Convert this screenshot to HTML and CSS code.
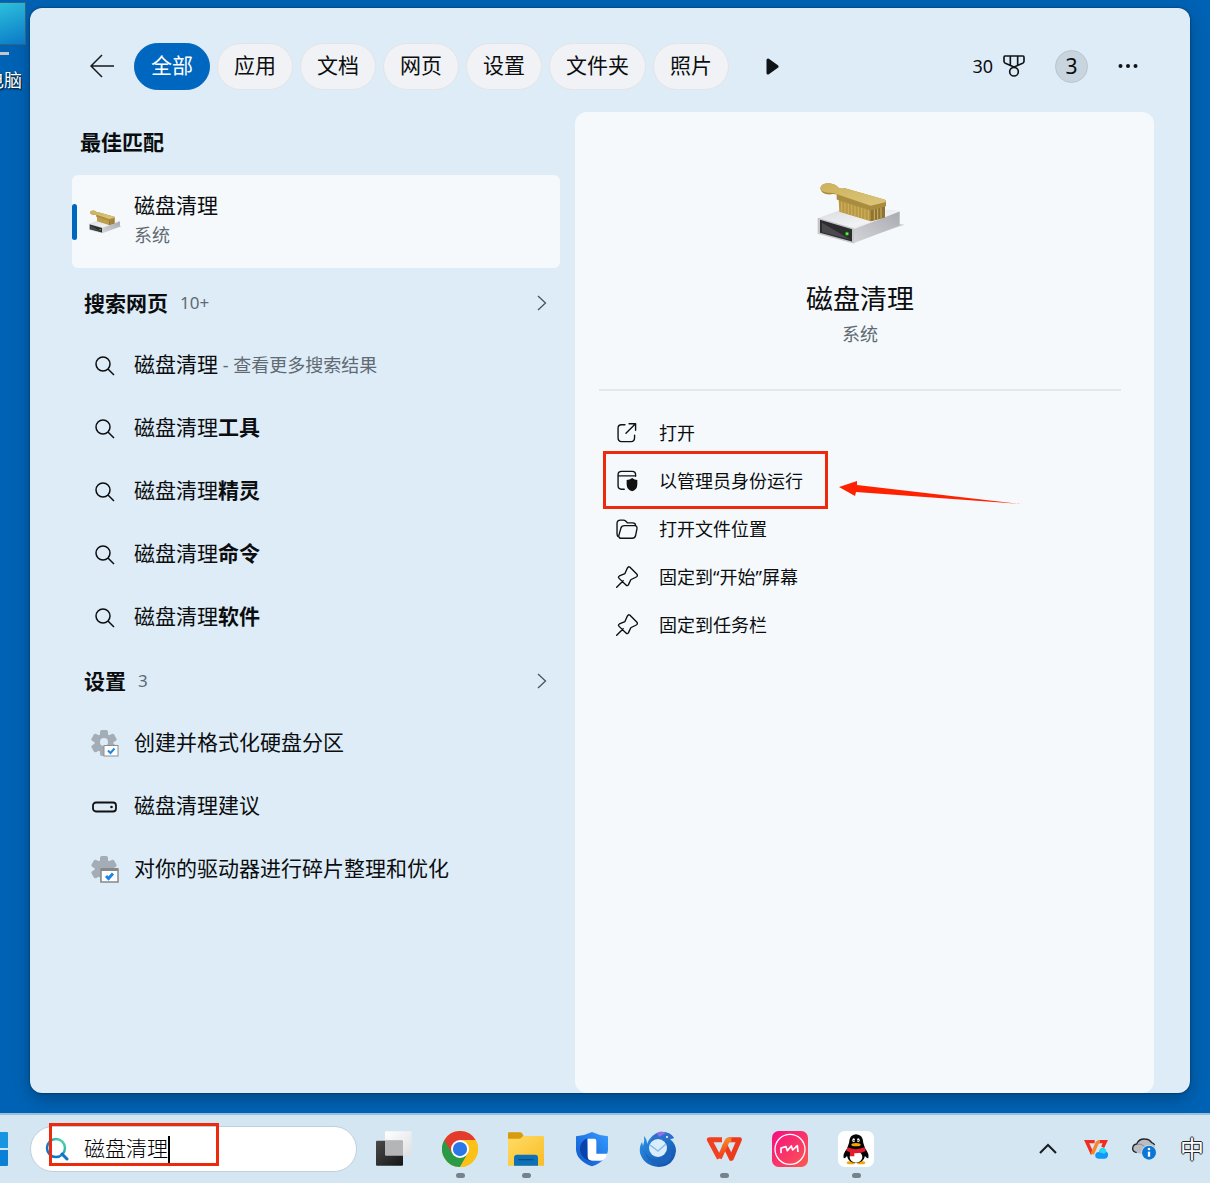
FILE: index.html
```html
<!DOCTYPE html>
<html lang="zh-CN">
  <head>
    <meta charset="UTF-8" />
    <meta name="viewport" content="width=device-width, initial-scale=1.0" />
    <title>搜索</title>
    <link rel="stylesheet" href="styles.css">
  </head>
  <body>
    <!-- Shared icons -->
    <svg class="sprite" aria-hidden="true">
      <defs>
        <linearGradient id="drive-top" x1="0" y1="0" x2="1" y2="1">
          <stop offset="0" stop-color="#d9dade" />
          <stop offset="0.6" stop-color="#f1f2f4" />
          <stop offset="1" stop-color="#c9cacf" />
        </linearGradient>
        <linearGradient id="drive-side" x1="0" y1="1" x2="1" y2="0">
          <stop offset="0" stop-color="#d4d5d9" />
          <stop offset="1" stop-color="#a9abb1" />
        </linearGradient>
        <linearGradient id="brush-wood" x1="0" y1="0" x2="1" y2="1">
          <stop offset="0" stop-color="#cdb25a" />
          <stop offset="1" stop-color="#dcc67c" />
        </linearGradient>
      </defs>
      <symbol id="disk-cleanup" viewBox="76 60 270 200">
        <path d="M190 246 L345 194 L325 190 Z" fill="#cfd3d8" />
        <path d="M84 174 L166 144 L325 150 Q331 151 330 158 L192 212 Z" fill="url(#drive-top)" />
        <path d="M190 208 L330 154 V196 L190 250 Z" fill="url(#drive-side)" />
        <path d="M84 173 L192 204 V250 L84 221 Z" fill="#c3c5c9" />
        <path d="M91 179 L187 207 V244 L91 218 Z" fill="#2c2c2e" />
        <path d="M97 188 L97 216 L183 239 Z" fill="#4a4a4c" />
        <circle cx="172" cy="221" r="6" fill="#17b317" />
        <circle cx="172" cy="221" r="3" fill="#7dff5c" />
        <path d="M147 118 L243 146 L286 136 V172 L243 183 L149 155 Z" fill="#b99843" />
        <path d="M243 144 L286 134 V172 L243 183 Z" fill="#8e7433" />
        <path d="M156 124 V156 M166 127 V159 M176 130 V162 M186 133 V165 M196 136 V168 M206 139 V171 M216 142 V174 M226 144 V177 M236 146 V180 M254 145 V179 M264 143 V177 M274 141 V174" stroke="#cfb263" stroke-width="3" />
        <path d="M92 84 Q94 69 118 69 Q136 70 146 82 Q150 87 166 84 L286 119 Q290 121 289 126 V138 L242 151 L141 118 V103 Q132 100 118 103 Q94 101 92 84 Z" fill="#a98c3d" />
        <path d="M92 83 Q94 69 118 69 Q136 70 146 82 Q150 87 166 84 L285 118 Q292 122 286 126 L243 137 L142 102 Q130 96 116 98 Q93 97 92 83 Z" fill="url(#brush-wood)" />
      </symbol>
      <symbol id="search" viewBox="0 0 20 20">
        <g fill="none" stroke="currentColor" stroke-width="1.5">
          <circle cx="8" cy="8" r="7" />
          <path d="M13 13 L19 19" />
        </g>
      </symbol>
      <symbol id="chevron" viewBox="0 0 10 16">
        <path d="M1 1 L8.500 8 L1 15" fill="none" stroke="currentColor" stroke-width="1.300" />
      </symbol>
      <symbol id="pin" viewBox="78 470 64 64">
        <path d="M80 532 L99 513 M118 473 L139 494 Q142 499 137 502 L121 510 L114 525 Q111 529 107 525 L87 506 Q83 502 88 499 L104 492 L111 476 Q114 471 118 473 Z" fill="none" stroke="currentColor" stroke-width="4" stroke-linejoin="round" stroke-linecap="round" />
      </symbol>
      <symbol id="gear" viewBox="0 0 28 27">
        <g fill="#a4adb5">
          <circle cx="13" cy="13" r="9.500" />
          <rect x="9" y="0" width="8" height="26" rx="2" />
          <rect x="9" y="0" width="8" height="26" rx="2" transform="rotate(60 13 13)" />
          <rect x="9" y="0" width="8" height="26" rx="2" transform="rotate(120 13 13)" />
        </g>
      </symbol>
    </svg>

    <main class="desktop">
      <div class="desktop-icon">
        <div class="monitor"></div>
        <div class="stand"></div>
        <span class="desktop-label">此电脑</span>
      </div>

      <section class="search-panel">
        <header class="panel-header">
          <button class="icon-btn" aria-label="返回">
            <svg width="24" height="24" viewBox="0 0 24 24" fill="none" stroke="#16191c" stroke-width="1.500">
              <path d="M12 1 L1 12 L12 23 M1 12 H24" />
            </svg>
          </button>
          <nav class="filters">
            <button class="pill active">全部</button>
            <button class="pill">应用</button>
            <button class="pill">文档</button>
            <button class="pill">网页</button>
            <button class="pill">设置</button>
            <button class="pill">文件夹</button>
            <button class="pill">照片</button>
          </nav>
          <button class="icon-btn" aria-label="更多筛选">
            <svg width="13" height="17" viewBox="0 0 13 17">
              <path d="M2 2 L11 8.500 L2 15 Z" fill="#111417" stroke="#111417" stroke-width="3" stroke-linejoin="round" />
            </svg>
          </button>
          <div class="header-right">
            <button class="rewards">
              <span>30</span>
              <svg width="22" height="22" viewBox="189 107 66 66" fill="none" stroke="#111417" stroke-width="5" stroke-linejoin="round">
                <path d="M195 110 H249 Q252 110 252 114 V126 Q252 130 248 132 L222 143 L196 132 Q192 130 192 126 V114 Q192 110 195 110 Z M211 110 V138 M233 110 V138" />
                <circle cx="222" cy="157" r="13" />
              </svg>
            </button>
            <button class="avatar">3</button>
            <button class="icon-btn" aria-label="选项">
              <svg width="20" height="6" viewBox="0 0 20 6" fill="#111417">
                <circle cx="2.500" cy="3" r="2" />
                <circle cx="10" cy="3" r="2" />
                <circle cx="17.500" cy="3" r="2" />
              </svg>
            </button>
          </div>
        </header>

        <div class="columns">
          <div class="results">
            <h2 class="best-title">最佳匹配</h2>
            <a href="#" class="best-match">
              <svg class="best-icon"><use href="#disk-cleanup" /></svg>
              <span class="best-text">
                <span>磁盘清理</span>
                <small>系统</small>
              </span>
            </a>

            <h2 class="group-title">
              搜索网页 <small>10+</small>
              <svg class="chevron"><use href="#chevron" /></svg>
            </h2>
            <ul class="result-list">
              <li><a href="#"><span class="result-icon"><svg width="20" height="20"><use href="#search" /></svg></span><span class="result-text">磁盘清理<small> - 查看更多搜索结果</small></span></a></li>
              <li><a href="#"><span class="result-icon"><svg width="20" height="20"><use href="#search" /></svg></span><span class="result-text">磁盘清理<b>工具</b></span></a></li>
              <li><a href="#"><span class="result-icon"><svg width="20" height="20"><use href="#search" /></svg></span><span class="result-text">磁盘清理<b>精灵</b></span></a></li>
              <li><a href="#"><span class="result-icon"><svg width="20" height="20"><use href="#search" /></svg></span><span class="result-text">磁盘清理<b>命令</b></span></a></li>
              <li><a href="#"><span class="result-icon"><svg width="20" height="20"><use href="#search" /></svg></span><span class="result-text">磁盘清理<b>软件</b></span></a></li>
            </ul>

            <h2 class="group-title">
              设置 <small>3</small>
              <svg class="chevron"><use href="#chevron" /></svg>
            </h2>
            <ul class="result-list">
              <li>
                <a href="#">
                  <span class="result-icon">
                    <svg width="28" height="27" viewBox="0 0 28 27">
                      <use href="#gear" width="28" height="27" />
                      <circle cx="13" cy="12" r="4" fill="#deecf7" />
                      <rect x="13" y="15.500" width="14" height="10.500" fill="#fff" stroke="#8b8f93" />
                      <path d="M17 20.500 L19.500 23 L23.500 18.500" fill="none" stroke="#1c86e0" stroke-width="2" />
                    </svg>
                  </span>
                  <span class="result-text">创建并格式化硬盘分区</span>
                </a>
              </li>
              <li>
                <a href="#">
                  <span class="result-icon">
                    <svg width="26" height="12" viewBox="0 0 26 12">
                      <rect x="1" y="1.500" width="23" height="9" rx="3" fill="none" stroke="#111" stroke-width="1.800" />
                      <circle cx="19.500" cy="6" r="1.300" fill="#111" />
                    </svg>
                  </span>
                  <span class="result-text">磁盘清理建议</span>
                </a>
              </li>
              <li>
                <a href="#">
                  <span class="result-icon">
                    <svg width="28" height="27" viewBox="0 0 28 27">
                      <use href="#gear" width="28" height="27" />
                      <rect x="10" y="13" width="17" height="13" fill="#fff" stroke="#85898c" stroke-width="1.500" />
                      <path d="M10 13.500 H27" stroke="#85898c" stroke-width="3" />
                      <path d="M15 20 L17.500 22.500 L22 17.500" fill="none" stroke="#1c86e0" stroke-width="3" />
                    </svg>
                  </span>
                  <span class="result-text">对你的驱动器进行碎片整理和优化</span>
                </a>
              </li>
            </ul>
          </div>

          <div class="preview">
            <svg class="preview-icon"><use href="#disk-cleanup" /></svg>
            <h1>磁盘清理</h1>
            <p>系统</p>
            <ul class="actions">
              <li>
                <button>
                  <svg viewBox="80 40 64 64" fill="none" stroke="#111" stroke-width="4" stroke-linecap="round" stroke-linejoin="round">
                    <path d="M106 48 H96 Q86 48 86 58 V86 Q86 97 96 97 H124 Q134 97 134 86 V78 M118 45 H137 V64 M136 46 L109 73" />
                  </svg>
                  打开
                </button>
              </li>
              <li class="marked">
                <button>
                  <svg viewBox="80 184 64 64" fill="none" stroke="#111" stroke-width="4" stroke-linecap="round">
                    <path d="M104 240 H96 Q86 240 86 230 V198 Q86 188 96 188 H127 Q137 188 137 198 V202 M86 201 H137" />
                    <path d="M127 207 Q134 213 142 213 V226 Q142 240 127 246 Q111 240 111 226 V213 Q120 213 127 207 Z" fill="#111" stroke="none" />
                  </svg>
                  以管理员身份运行
                </button>
                <span class="red-box"></span>
                <svg class="red-arrow" viewBox="0 0 182 24">
                  <path d="M0 6 L18 0 V4 L182 23 L17 11 L16 15 Z" fill="#ff2200" />
                </svg>
              </li>
              <li>
                <button>
                  <svg viewBox="78 326 64 64" fill="none" stroke="#111" stroke-width="4" stroke-linejoin="round">
                    <path d="M84 380 Q81 378 81 372 V342 Q81 332 91 332 H99 Q103 332 106 335 L111 340 H126 Q135 340 135 348 M93 385 H125 Q133 385 135 377 L139 357 Q140 348 132 348 H103 Q94 348 92 356 L86 378 Q86 385 93 385 Z" />
                  </svg>
                  打开文件位置
                </button>
              </li>
              <li><button><svg><use href="#pin" /></svg>固定到“开始”屏幕</button></li>
              <li><button><svg><use href="#pin" /></svg>固定到任务栏</button></li>
            </ul>
          </div>
        </div>
      </section>
    </main>

    <footer class="taskbar">
      <button class="start-btn" aria-label="开始">
        <svg width="8" height="36" viewBox="0 0 8 36">
          <path d="M0 1 H7 Q8 1 8 2 V17 H0 Z" fill="#1795e0" />
          <path d="M0 19 H8 V34 Q8 35 7 35 H0 Z" fill="#0a80d6" />
        </svg>
      </button>
      <label class="search-box">
        <svg width="24" height="24" viewBox="0 0 24 24" fill="none" stroke-width="2.500">
          <defs>
            <linearGradient id="lens" x1="0" y1="1" x2="1" y2="0">
              <stop offset="0.300" stop-color="#1173c9" />
              <stop offset="0.900" stop-color="#4fd6a0" />
            </linearGradient>
          </defs>
          <circle cx="11" cy="11" r="9" stroke="url(#lens)" />
          <path d="M17 17 L22 22" stroke="#1173c9" stroke-width="3" stroke-linecap="round" />
        </svg>
        <input type="text" value="磁盘清理" aria-label="搜索" />
        <span class="caret"></span>
        <span class="red-box"></span>
      </label>

      <nav class="apps">
        <button aria-label="任务视图">
          <svg width="36" height="36" viewBox="1128 154 108 108">
            <defs>
              <linearGradient id="tv-dark" x1="0" y1="0" x2="1" y2="1"><stop offset="0" stop-color="#4a4a4a" /><stop offset="1" stop-color="#161616" /></linearGradient>
              <linearGradient id="tv-light" x1="0" y1="0" x2="1" y2="1"><stop offset="0" stop-color="#fff" /><stop offset="1" stop-color="#dedfe2" /></linearGradient>
            </defs>
            <rect x="1155" y="155" width="80" height="73" rx="3" fill="url(#tv-light)" />
            <rect x="1128" y="183" width="81" height="75" rx="3" fill="url(#tv-dark)" />
            <path d="M1155 183 H1206 Q1209 183 1209 186 V228 H1158 Q1155 228 1155 225 Z" fill="#b4b5b6" />
          </svg>
        </button>
        <button class="running" aria-label="Chrome">
          <svg width="36" height="36" viewBox="0 0 48 48">
            <circle cx="24" cy="24" r="24" fill="#fbc116" />
            <path d="M24 24 L3.200 12 A24 24 0 0 0 24 48 L34.400 30 Z" fill="#2a9a47" />
            <path d="M3.200 12 A24 24 0 0 1 44.800 12 H24 L13.600 30 Z" fill="#e33b2e" />
            <path d="M44.800 12 A24 24 0 0 1 24 48 L34.400 30 L24 12 Z" fill="#fbc116" />
            <circle cx="24" cy="24" r="12" fill="#fff" />
            <circle cx="24" cy="24" r="9.500" fill="#2b77e8" />
          </svg>
        </button>
        <button class="running" aria-label="文件资源管理器">
          <svg width="36" height="36" viewBox="264 64 108 108">
            <defs>
              <linearGradient id="folder" x1="0" y1="0" x2="1" y2="1"><stop offset="0" stop-color="#ffdc66" /><stop offset="1" stop-color="#f9bd25" /></linearGradient>
            </defs>
            <path d="M264 70 Q264 68 267 68 H300 Q304 68 306 71 L311 79 V96 H264 Z" fill="#d79b0c" />
            <path d="M264 87 H298 Q303 87 306 83 L309 79 H368 Q372 79 372 83 V168 H264 Z" fill="url(#folder)" />
            <path d="M282 168 V144 Q282 135 291 135 H345 Q354 135 354 144 V168 Z" fill="#0d71b9" />
            <path d="M297 150 H339" stroke="#074b80" stroke-width="4" stroke-linecap="round" />
          </svg>
        </button>
        <button aria-label="电脑管家">
          <svg width="36" height="36" viewBox="462 62 108 108">
            <defs>
              <linearGradient id="shield" x1="0" y1="1" x2="1" y2="0"><stop offset="0" stop-color="#0d55cc" /><stop offset="1" stop-color="#379cff" /></linearGradient>
            </defs>
            <path d="M516 65 Q538 76 564 78 V118 Q562 151 516 168 Q470 151 468 118 V78 Q494 76 516 65 Z" fill="url(#shield)" />
            <path d="M500 84 Q474 99 481 126 Q486 146 512 153 L536 150 L504 140 Z" fill="#0b43ad" />
            <path d="M503 85 H523 Q529 85 529 91 V130 H562 Q556 152 540 151 H516 Q503 151 503 138 Z" fill="#fff" />
          </svg>
        </button>
        <button aria-label="Thunderbird">
          <svg width="38" height="38" viewBox="0 0 38 38">
            <defs>
              <linearGradient id="bird" x1="0" y1="0" x2="1" y2="1"><stop offset="0" stop-color="#2999ee" /><stop offset="1" stop-color="#144ba4" /></linearGradient>
            </defs>
            <path d="M5 6 Q8 9 8 14 Q12 4 21 2 Q31 1 35 8 L31 9 Q37 14 37 21 Q35 36 20 37 Q5 36 1 23 Q0 17 3 12 L4 16 Q6 11 5 6 Z" fill="url(#bird)" />
            <path d="M12 9 Q17 1 25 2 Q32 3 35 8 L28 10 Q19 7 12 13 Z" fill="#2f6fce" />
            <path d="M18 3 Q22 0 27 3 L20 7 Z" fill="#8f71df" />
            <circle cx="19" cy="18" r="9" fill="#d9edfd" />
            <path d="M11 15 L19 21 L27 14" fill="none" stroke="#8bbbe9" stroke-width="1.500" />
            <path d="M5 20 Q9 31 21 29 Q30 28 32 21 Q34 32 24 34 Q9 35 5 20 Z" fill="#1b63bd" />
            <circle cx="28" cy="7" r="1" fill="#fff" />
          </svg>
        </button>
        <button class="running" aria-label="WPS">
          <svg width="36" height="26" viewBox="78 80 108 78">
            <defs>
              <linearGradient id="wps" x1="0" y1="1" x2="0" y2="0"><stop offset="0.200" stop-color="#f0451f" /><stop offset="1" stop-color="#f98427" /></linearGradient>
            </defs>
            <g fill="none" stroke-width="15" stroke-linejoin="round">
              <path d="M126 91 H88 L118 147" stroke="#f0401f" />
              <path d="M133 104 L154 147 L178 91 H146" stroke="#ee3a1c" />
              <path d="M118 147 L141 96 Q143 91 149 91 H154" stroke="url(#wps)" />
            </g>
          </svg>
        </button>
        <button aria-label="MuMu">
          <svg width="36" height="36" viewBox="276 62 108 108">
            <defs>
              <linearGradient id="mumu" x1="0" y1="0" x2="1" y2="1"><stop offset="0" stop-color="#f70c83" /><stop offset="1" stop-color="#fb5b50" /></linearGradient>
            </defs>
            <rect x="276" y="62" width="108" height="108" rx="20" fill="url(#mumu)" />
            <circle cx="330" cy="117" r="45" fill="none" stroke="#fff" stroke-width="4" />
            <path d="M303 129 V113 L318 109 L322 121 L334 107 L338 119 L352 106 L354 125" fill="none" stroke="#fff" stroke-width="5" stroke-linejoin="round" />
          </svg>
        </button>
        <button class="running" aria-label="QQ">
          <svg width="36" height="36" viewBox="474 62 108 108">
            <rect x="474" y="62" width="108" height="108" rx="20" fill="#fff" />
            <ellipse cx="513" cy="157" rx="13" ry="5" fill="#f5a800" />
            <ellipse cx="543" cy="157" rx="13" ry="5" fill="#f5a800" />
            <path d="M528 72 Q549 73 550 98 Q553 108 556 115 Q568 130 565 143 Q562 146 555 137 Q551 157 528 158 Q505 157 501 137 Q494 146 491 143 Q488 130 501 115 L507 98 Q508 73 528 72 Z" fill="#050505" />
            <ellipse cx="528" cy="140" rx="19" ry="17" fill="#fff" />
            <path d="M502 111 Q527 122 554 111 L557 122 Q544 130 523 129 V138 H510 V126 L499 121 Z" fill="#e31b2c" />
            <ellipse cx="521" cy="90" rx="4" ry="6" fill="#fff" />
            <ellipse cx="535" cy="90" rx="4" ry="6" fill="#fff" />
            <circle cx="522" cy="91" r="2" fill="#000" />
            <circle cx="534" cy="91" r="2" fill="#000" />
            <ellipse cx="528" cy="103" rx="14" ry="5" fill="#f5a800" />
          </svg>
        </button>
      </nav>

      <div class="tray">
        <button aria-label="显示隐藏的图标">
          <svg width="18" height="12" viewBox="0 0 18 12"><path d="M1 10 L9 2 L17 10" fill="none" stroke="#1a1d20" stroke-width="2" /></svg>
        </button>
        <button aria-label="WPS 云">
          <svg width="24" height="20" viewBox="222 181 72 60">
            <g fill="none" stroke-width="10">
              <path d="M254 189 H230 L247 226" stroke="#f02c22" />
              <path d="M266 189 H286 L278 206" stroke="#f02c22" />
              <path d="M247 226 L262 192 Q264 189 270 189" stroke="#fa842a" />
            </g>
            <path d="M265 240 Q254 238 256 227 Q259 219 267 220 Q269 207 280 208 Q288 210 289 219 Q296 222 294 232 Q292 240 284 240 Z" fill="#1298f8" />
            <path d="M280 208 Q269 208 267 221 L283 225 L289 219 Q288 210 280 208 Z" fill="#28d8ef" />
          </svg>
        </button>
        <button aria-label="OneDrive">
          <svg width="24" height="22" viewBox="366 178 72 66">
            <path d="M378 222 Q367 219 368 208 Q370 197 380 196 Q387 180 404 181 Q420 182 426 196 Q435 198 436 208 L400 226 Z" fill="#b9bcc0" />
            <path d="M380 222 Q367 219 368 208 Q370 197 380 196 Q387 180 404 181 Q418 181 425 192 Q431 194 434 199" fill="none" stroke="#202326" stroke-width="4" />
            <path d="M381 197 Q394 193 404 204" fill="none" stroke="#888b90" stroke-width="3" />
            <circle cx="417" cy="222" r="23" fill="#d3e6f2" />
            <circle cx="417" cy="222" r="21" fill="#0b76d6" />
            <circle cx="417" cy="211" r="4" fill="#fff" />
            <path d="M417 219 V234" stroke="#fff" stroke-width="7" />
          </svg>
        </button>
        <button class="ime">中</button>
      </div>
    </footer>
  </body>
</html>
```

FILE: styles.css
```css
* {
  box-sizing: border-box;
}

body {
  display: flex;
  flex-direction: column;
  min-height: 100vh;
  margin: 0;
  background-color: #0062b4;
  color: #0b0d0f;
  font-family: "Noto Sans", "Noto Sans CJK SC", sans-serif;
  font-size: 21px;
  line-height: 30px;
}

h1,
h2,
p,
ul {
  margin: 0;
  padding: 0;
}

ul {
  list-style: none;
}

a {
  color: inherit;
  text-decoration: none;
}

button {
  padding: 0;
  border: none;
  background: none;
  color: inherit;
  font: inherit;
  cursor: pointer;
}

svg {
  display: block;
  flex-shrink: 0;
}

small {
  color: #5f6a73;
  font-size: 18px;
  font-weight: normal;
}

.sprite {
  position: absolute;
  width: 0;
  height: 0;
}

/* Desktop */
.desktop {
  position: relative;
  display: flex;
  flex: 1;
  padding: 8px 20px 20px 30px;
}

.desktop-icon {
  position: absolute;
  top: 2px;
  left: 0;
  width: 26px;
}

.monitor {
  height: 43px;
  border: 1px solid #35637d;
  border-left: none;
  background: linear-gradient(160deg, #2cc0dc, #0a79c6);
}

.stand {
  width: 9px;
  height: 3px;
  margin-top: 7px;
  background-color: #c3c7ca;
}

.desktop-label {
  display: flex;
  justify-content: flex-end;
  width: 22px;
  margin-top: 10px;
  overflow: hidden;
  color: #fff;
  font-size: 18px;
  white-space: nowrap;
  text-shadow: 1px 1px 2px #000;
}

/* Search panel */
.search-panel {
  display: flex;
  flex: 1;
  flex-direction: column;
  border-radius: 12px;
  background-color: #deecf7;
  box-shadow: 0 0 2px rgba(0, 0, 0, 0.6), 0 6px 16px rgba(0, 0, 0, 0.25);
}

.panel-header {
  display: flex;
  align-items: center;
  height: 104px;
  padding: 12px 52px 0 60px;
}

.panel-header .filters {
  display: flex;
  gap: 7px;
  margin: 0 37px 0 20px;
}

.pill {
  height: 47px;
  padding: 0 16px 2px;
  border: 1px solid #e4e4e7;
  border-radius: 24px;
  background-color: #f0f2f5;
  white-space: nowrap;
}

.pill.active {
  border-color: #0067c0;
  background-color: #0067c0;
  color: #fff;
}

.header-right {
  display: flex;
  align-items: center;
  gap: 30px;
  margin-left: auto;
}

.rewards {
  display: flex;
  align-items: center;
  gap: 10px;
  font-size: 18px;
}

.avatar {
  width: 33px;
  height: 33px;
  border: 1px solid #b9c5ce;
  border-radius: 50%;
  background-color: #c8d5de;
}

.columns {
  display: grid;
  flex: 1;
  grid-template-columns: 488fr 579fr;
  gap: 15px;
  padding: 0 36px 0 42px;
}

/* Results */
h2 {
  font-size: 21px;
}

.best-title {
  padding: 15px 8px 18px;
}

.best-match {
  position: relative;
  display: flex;
  align-items: center;
  gap: 12px;
  height: 93px;
  margin-bottom: 3px;
  padding-left: 16px;
  border-radius: 6px;
  background-color: #f5f9fc;
}

.best-match::before {
  content: "";
  position: absolute;
  left: 0;
  width: 5px;
  height: 36px;
  border-radius: 3px;
  background-color: #0067c0;
}

.best-icon {
  width: 34px;
  height: 26px;
}

.best-text {
  display: flex;
  flex-direction: column;
  padding-bottom: 3px;
}

.group-title {
  display: flex;
  align-items: center;
  gap: 12px;
  height: 63px;
  padding: 0 13px 0 12px;
}

.group-title small {
  font-size: 17px;
}

.chevron {
  width: 10px;
  height: 16px;
  margin-left: auto;
  color: #4a545c;
}

.result-list a {
  display: flex;
  align-items: center;
  height: 63px;
  padding-left: 19px;
}

.result-icon {
  display: flex;
  justify-content: center;
  width: 28px;
  margin-right: 15px;
}

.result-text {
  padding-bottom: 3px;
}

/* Preview */
.preview {
  padding: 68px 33px 0 24px;
  border-radius: 12px;
  background-color: #f5f9fc;
  text-align: center;
}

.preview-icon {
  width: 90px;
  height: 67px;
  margin: 0 auto;
}

.preview h1 {
  margin-top: 34px;
  font-size: 27px;
  font-weight: normal;
  line-height: 36px;
}

.preview p {
  margin-top: 5px;
  color: #5f6a73;
  font-size: 18px;
  line-height: 24px;
}

.actions {
  margin-top: 43px;
  padding-top: 18px;
  border-top: 2px solid #e3e8ec;
}

.actions li {
  position: relative;
}

.actions button {
  display: flex;
  align-items: center;
  gap: 21px;
  width: 100%;
  height: 48px;
  padding-left: 17px;
  font-size: 18px;
}

.actions button svg {
  width: 22px;
  height: 22px;
}

.red-box {
  position: absolute;
  border: 3px solid #ee2a0c;
  pointer-events: none;
}

.marked .red-box {
  top: -6px;
  left: 4px;
  width: 225px;
  height: 58px;
}

.red-arrow {
  position: absolute;
  top: 24px;
  left: 240px;
  width: 182px;
  height: 24px;
}

/* Taskbar */
.taskbar {
  display: flex;
  align-items: center;
  height: 70px;
  border-top: 2px solid #9cc0dc;
  background-color: #d3e6f2;
}

.start-btn {
  width: 30px;
}

.search-box {
  position: relative;
  display: flex;
  align-items: center;
  width: 327px;
  height: 46px;
  padding-left: 14px;
  border: 1px solid #bfd0dc;
  border-radius: 23px;
  background-color: #fff;
}

.search-box input {
  width: 84px;
  margin-left: 15px;
  padding: 0 0 2px;
  border: none;
  outline: none;
  background: none;
  color: #000;
  font: inherit;
  font-weight: 300;
}

.caret {
  width: 2px;
  height: 27px;
  background-color: #000;
}

.search-box .red-box {
  top: -4px;
  left: 18px;
  width: 170px;
  height: 43px;
}

.apps {
  display: flex;
  margin-left: 4px;
}

.apps button {
  position: relative;
  display: flex;
  align-items: center;
  justify-content: center;
  width: 66px;
  height: 68px;
}

.apps .running::after {
  content: "";
  position: absolute;
  bottom: 5px;
  width: 9px;
  height: 5px;
  border-radius: 3px;
  background-color: #75828c;
}

.tray {
  display: flex;
  gap: 12px;
  margin-left: auto;
}

.tray button {
  display: flex;
  align-items: center;
  justify-content: center;
  width: 36px;
  height: 36px;
}

.tray .ime {
  color: #fff;
  font-size: 24px;
  text-shadow: 1px 0 #222, -1px 0 #222, 0 1px #222, 0 -1px #222;
}
```
